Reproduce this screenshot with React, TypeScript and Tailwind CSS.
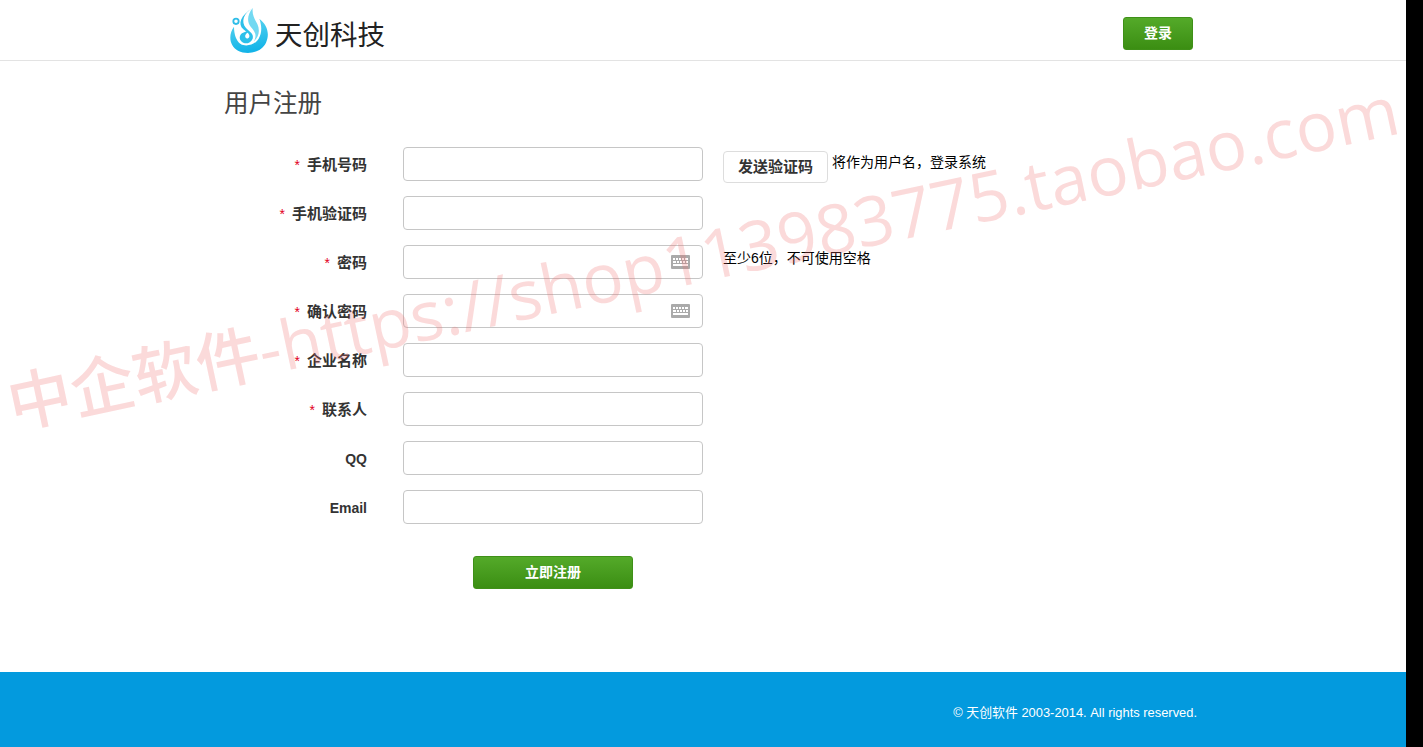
import React from "react";

const FONT = "font-['Liberation_Sans','Noto_Sans_CJK_SC',sans-serif]";

function Logo() {
  return (
    <svg width="50" height="54" viewBox="0 0 150 162" className="shrink-0">
      <defs>
        <linearGradient id="lg" x1="0" y1="0" x2="0.2" y2="1">
          <stop offset="0" stopColor="#5fd6f0" />
          <stop offset="1" stopColor="#14b4e8" />
        </linearGradient>
      </defs>
      <circle cx="30" cy="52" r="8" fill="none" stroke="#2fbde8" strokeWidth="5.5" />
      <path
        fill="url(#lg)"
        d="M24 68 C6 92 10 126 36 140 C64 154 106 146 120 116 C132 90 124 62 100 44 C108 66 108 88 98 104 C88 122 60 130 44 120 C30 110 24 90 24 68 Z"
      />
      <path
        fill="#2cc0ea"
        d="M80 12 C52 28 44 54 60 72 C72 84 84 90 80 104 C74 118 58 122 48 114 C38 106 40 94 48 88 C54 84 60 82 68 84 C60 88 56 94 58 100 C62 106 68 104 70 98 C72 90 62 84 52 76 C34 60 44 34 80 12 Z"
      />
      <path
        fill="#72d9f2"
        d="M80 12 C64 32 62 52 74 68 C86 82 94 92 84 112 C100 96 102 78 94 60 C86 44 78 34 80 12 Z"
      />
    </svg>
  );
}

function Keyboard() {
  return (
    <svg width="19" height="14" viewBox="0 0 19 14" className="block">
      <rect width="19" height="14" rx="1" fill="#aaaaaa" />
      <g fill="#ffffff">
        <rect x="2" y="3" width="2" height="2" />
        <rect x="5" y="3" width="2" height="2" />
        <rect x="8" y="3" width="2" height="2" />
        <rect x="11" y="3" width="2" height="2" />
        <rect x="14" y="3" width="3" height="2" />
        <rect x="2" y="6" width="3" height="2" />
        <rect x="6" y="6" width="2" height="2" />
        <rect x="9" y="6" width="2" height="2" />
        <rect x="12" y="6" width="2" height="2" />
        <rect x="15" y="6" width="2" height="2" />
        <rect x="2" y="9" width="15" height="2" />
      </g>
    </svg>
  );
}

function Row({
  label,
  required,
  keyboard,
  latin,
  extra,
}: {
  label: string;
  required?: boolean;
  keyboard?: boolean;
  latin?: boolean;
  extra?: React.ReactNode;
}) {
  return (
    <div className="flex items-center h-[34px]">
      <div
        className={
          "w-[144px] h-[34px] pt-[1px] text-right font-bold text-[#333333] leading-[34px] " +
          (latin ? "text-[14px] -mr-[1px]" : "text-[15px]")
        }
      >
        {required && <span className="text-[#e2001a] font-normal mr-[7px] text-[14px]">*</span>}
        {label}
      </div>
      <div className={"relative w-[300px] h-[34px] " + (latin ? "ml-[37px]" : "ml-[36px]")}>
        <input className="block w-full h-full bg-white border border-[#c6c6c6] rounded-[4px] outline-none" />
        {keyboard && (
          <span className="absolute right-[13px] top-[10px]">
            <Keyboard />
          </span>
        )}
      </div>
      {extra}
    </div>
  );
}

function GreenButton({ children, className }: { children: React.ReactNode; className: string }) {
  return (
    <button
      className={
        "block rounded-[3px] border border-[#3f9018] bg-gradient-to-b from-[#54aa29] to-[#3b8e12] text-white font-bold text-[14px] " +
        className
      }
    >
      {children}
    </button>
  );
}

export default function App() {
  return (
    <div className={"flex h-[747px] overflow-hidden bg-black " + FONT}>
      <div className="relative w-[1406px] shrink-0 flex flex-col bg-white overflow-hidden">
        <header className="h-[61px] border-b border-[#e3e3e3] shrink-0">
          <div className="w-[980px] mx-auto flex items-center justify-between h-full">
            <div className="flex items-center ml-[13px] mt-[2px]">
              <Logo />
              <span className="text-[27.5px] text-[#222222] leading-none -ml-[1px] mt-[9px]">天创科技</span>
            </div>
            <GreenButton className="w-[70px] h-[33px] mt-[6px]">登录</GreenButton>
          </div>
        </header>

        <main className="flex-1 w-[960px] mx-auto">
          <h1 className="text-[24.5px] leading-[34px] font-normal text-[#444444] pl-[1px] mt-[26px]">用户注册</h1>
          <div className="mt-[26px] flex flex-col gap-[15px]">
            <Row
              label="手机号码"
              required
              extra={
                <div className="flex items-start ml-[20px] h-[34px]">
                  <button className="mt-[4px] pt-[1px] w-[105px] h-[32px] bg-white border border-[#dddddd] rounded-[4px] text-[15px] font-bold text-[#333333]">
                    发送验证码
                  </button>
                  <span className="ml-[4px] mt-[6px] text-[14px] leading-[18px] text-black">将作为用户名，登录系统</span>
                </div>
              }
            />
            <Row label="手机验证码" required />
            <Row
              label="密码"
              required
              keyboard
              extra={<span className="ml-[20px] -mt-[8px] text-[14px] leading-[18px] text-black">至少6位，不可使用空格</span>}
            />
            <Row label="确认密码" required keyboard />
            <Row label="企业名称" required />
            <Row label="联系人" required />
            <Row label="QQ" latin />
            <Row label="Email" latin />
          </div>
          <GreenButton className="w-[160px] h-[33px] ml-[250px] mt-[32px]">立即注册</GreenButton>
        </main>

        <footer className="h-[75px] bg-[#039ade] shrink-0">
          <div className="w-[960px] mx-auto h-full flex items-center justify-end">
            <span className="text-[12.9px] text-white whitespace-nowrap -mr-[14px] mt-[6px]">© 天创软件 2003-2014. All rights reserved.</span>
          </div>
        </footer>

        <div className="absolute left-[8px] top-[369px] origin-left -rotate-[12deg] whitespace-nowrap pointer-events-none text-[68.5px] font-medium leading-none text-[#ee6a6a]/25 font-['Open_Sans','Noto_Sans_CJK_SC',sans-serif]">
          <span className="text-[64px]">中企软件</span>-https://shop113983775.taobao.com
        </div>
      </div>
      <div className="flex-1 bg-black" />
    </div>
  );
}
